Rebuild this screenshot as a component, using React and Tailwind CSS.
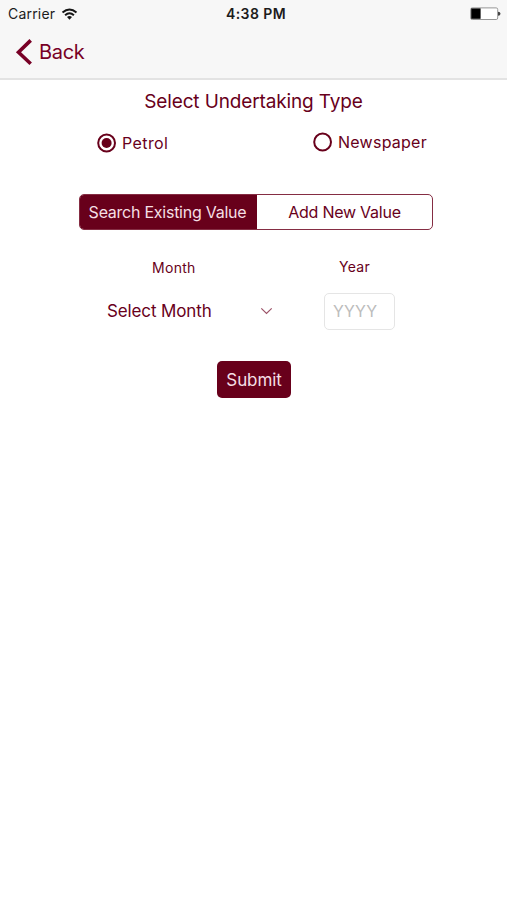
function StatusBar() {
  return (
    <div className="flex h-[28px] items-center leading-[28px] text-[#1c1c1c]">
      <div className="flex w-[169px] items-center pl-[8px]">
        <span className="w-[47px] text-[14px] tracking-[0.2px]">Carrier</span>
        <svg className="ml-[6px] h-[12px] w-[17px]" viewBox="0 0 16 12" fill="none" stroke="#151515" strokeWidth="2">
          <path d="M1 4.4Q8-1.5 15 4.4M3.6 7.2Q8 3.3 12.4 7.2" />
          <path d="M5.5 9Q8 6.9 10.5 9L8 11.7Z" fill="#151515" stroke="none" />
        </svg>
      </div>
      <div className="w-[174px] text-center text-[14px] font-semibold tracking-[0.4px]">4:38 PM</div>
      <div className="flex flex-1 justify-end pr-[6px]">
        <svg className="h-[14px] w-[31px]" viewBox="0 0 31 14">
          <rect x="0.7" y="0.9" width="27" height="11.6" rx="1.5" fill="#fff" stroke="#969696" />
          <rect x="1.2" y="1.4" width="9.4" height="10.4" fill="#000" />
          <path d="M28 4.7Q30.5 4.7 30.5 6.7T28 8.7Z" fill="#444" />
        </svg>
      </div>
    </div>
  );
}

function Radio({ checked }) {
  return (
    <svg className="h-[20px] w-[20px] shrink-0" viewBox="0 0 20 20">
      <circle cx="9.6" cy="10" r="8.4" fill="none" stroke="#68001b" strokeWidth="2" />
      {checked && <circle cx="9.6" cy="10" r="5" fill="#68001b" />}
    </svg>
  );
}

export default function App() {
  return (
    <div className="flex h-[900px] w-[507px] flex-col overflow-hidden whitespace-nowrap bg-white font-['Inter',sans-serif] text-[#68001b]">
      <header className="h-[80px] border-b-2 border-[#e3e3e3] bg-[#f7f7f7]">
        <StatusBar />
        <button className="flex h-[48px] items-center pl-[15px] text-[20px] text-[#780026]">
          <svg className="h-[28px] w-[18px]" viewBox="0 0 18 28" fill="none" stroke="#780026" strokeWidth="3.6">
            <path d="M15.7 2.4L3.5 14.2L15.7 25.8" />
          </svg>
          <span className="ml-[6px] tracking-[-0.3px]">Back</span>
        </button>
      </header>
      <main className="flex flex-col">
        <h1 className="mt-[8px] h-[28px] text-center text-[19px] leading-[28px] tracking-[-0.13px]">Select Undertaking Type</h1>
        <div className="mt-[15px] flex h-[24px] pl-[97px] text-[16px] leading-[24px]">
          <label className="flex w-[216px] items-center gap-[5px]"><Radio checked /><span className="tracking-[0.4px]">Petrol</span></label>
          <label className="-mt-[2px] flex items-center gap-[5px]"><Radio /><span className="tracking-[0.25px]">Newspaper</span></label>
        </div>
        <div className="ml-[79px] mt-[39px] flex h-[36px] w-[354px] overflow-hidden rounded-[5px] border border-[#852d43] text-[16px] tracking-[-0.25px]">
          <button className="w-[177px] bg-[#68001b] pb-px pr-[2px] text-[#f5dfe4]">Search Existing Value</button>
          <button className="flex-1 pb-px">Add New Value</button>
        </div>
        <div className="mt-[27px] flex h-[22px] pl-[152px] text-[14px] leading-[22px] tracking-[0.3px]">
          <span className="w-[187px]">Month</span>
          <span className="-mt-px">Year</span>
        </div>
        <div className="mt-[13px] flex h-[38px] items-center pl-[107px] text-[17px]">
          <span className="w-[153px] pt-[2px] tracking-[-0.12px]">Select Month</span>
          <svg className="h-[8px] w-[13px]" viewBox="0 0 13 8" fill="none" stroke="#9c5368" strokeWidth="1.2">
            <path d="M1.3 1.3L6.5 6.5L11.7 1.3" />
          </svg>
          <div className="ml-[51px] flex h-[37px] w-[71px] items-center rounded-[5px] border border-[#e5e5e5] pb-px pl-[8px] text-[16px] tracking-[0.2px] text-[#bcbcbc]">YYYY</div>
        </div>
        <button className="ml-[217px] mt-[31px] h-[37px] w-[74px] rounded-[5px] bg-[#68001b] pt-[2px] text-[17px] tracking-[-0.1px] text-[#f5dfe4]">Submit</button>
      </main>
    </div>
  );
}
